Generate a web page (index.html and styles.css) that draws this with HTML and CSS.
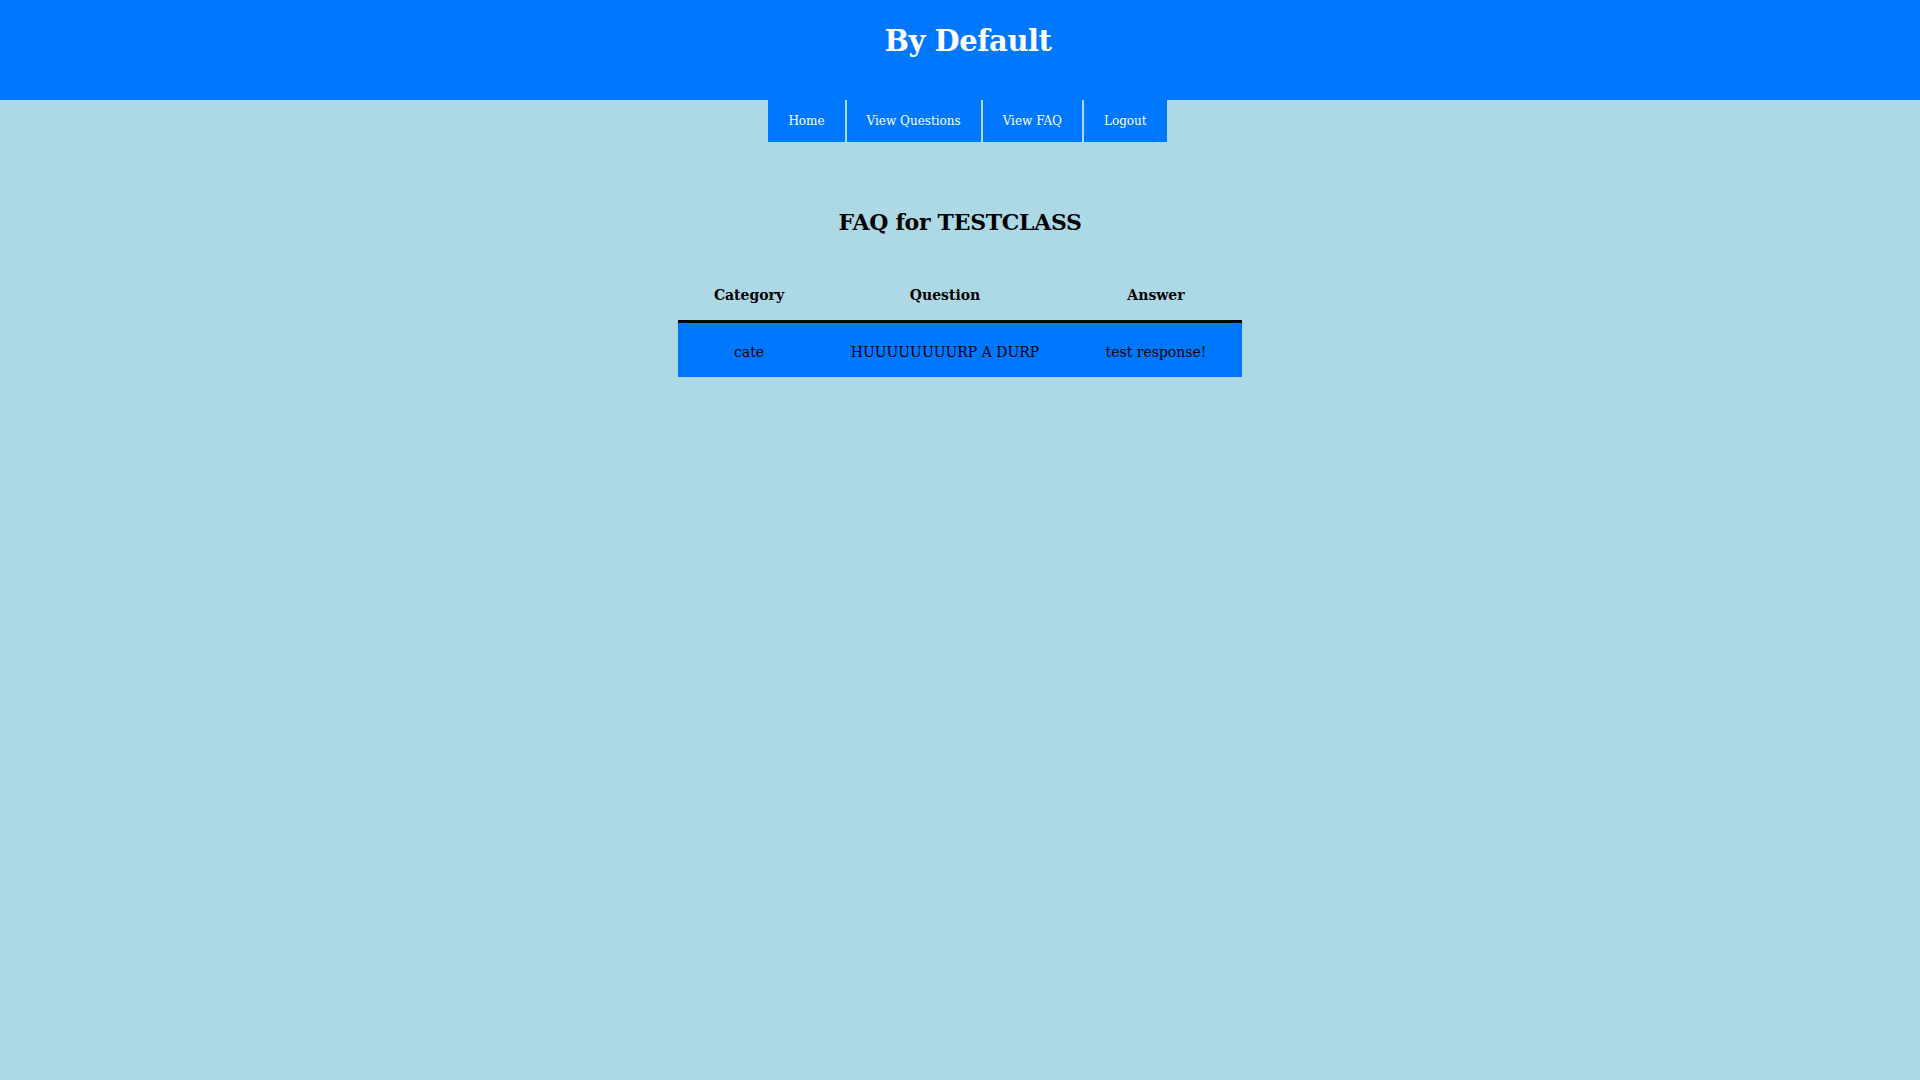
FILE: index.html
```html
<!DOCTYPE html>
<html lang="en">
<head>
<meta charset="utf-8">
<title>FAQ for TESTCLASS</title>
<link rel="stylesheet" href="styles.css">
</head>
<body>
<header class="site-header">
  <h1 class="site-title">By Default</h1>
</header>
<nav class="site-nav">
  <a class="nav-item" href="#">Home</a>
  <a class="nav-item" href="#">View Questions</a>
  <a class="nav-item" href="#">View FAQ</a>
  <a class="nav-item" href="#">Logout</a>
</nav>
<main class="content">
  <h2 class="page-title">FAQ for TESTCLASS</h2>
  <table class="faq-table">
    <thead>
      <tr>
        <th class="col-cat">Category</th>
        <th class="col-q">Question</th>
        <th class="col-a">Answer</th>
      </tr>
    </thead>
    <tbody>
      <tr>
        <td>cate</td>
        <td>HUUUUUUUURP A DURP</td>
        <td>test response!</td>
      </tr>
    </tbody>
  </table>
</main>
</body>
</html>
```
FILE: styles.css
```css
html, body {
  margin: 0;
  padding: 0;
}
body {
  background: #add8e6;
  font-family: "DejaVu Serif", "Liberation Serif", serif;
  color: #000;
}
.site-header {
  background: #0077ff;
  height: 100px;
  display: flex;
  justify-content: center;
  padding-left: 16px;
  box-sizing: border-box;
}
.site-title {
  margin: 0;
  padding-top: 21px;
  color: #fff;
  font-size: 29px;
  font-weight: bold;
  line-height: 40px;
  letter-spacing: -0.5px;
}
.site-nav {
  display: flex;
  justify-content: center;
  gap: 2px;
  padding-left: 15px;
  height: 42px;
}
.nav-item {
  display: flex;
  align-items: center;
  padding: 0 20px;
  background: #0077ff;
  color: #fff;
  text-decoration: none;
  font-size: 12px;
}
.content {
  display: flex;
  flex-direction: column;
  align-items: center;
}
.page-title {
  margin: 63px 0 0;
  font-size: 22px;
  line-height: 34px;
  font-weight: bold;
  letter-spacing: -0.3px;
}
.faq-table {
  margin-top: 31px;
  border-collapse: collapse;
  width: 564px;
}
.faq-table th {
  font-size: 14px;
  font-weight: bold;
  height: 50px;
  border-bottom: 3px solid #000;
  padding: 0;
}
.faq-table td {
  background: #0077ff;
  font-size: 14px;
  height: 50px;
  text-align: center;
  padding: 4px 0 0;
}
.col-cat { width: 142px; }
.col-q { width: 250px; }
.col-a { width: 172px; }
```
